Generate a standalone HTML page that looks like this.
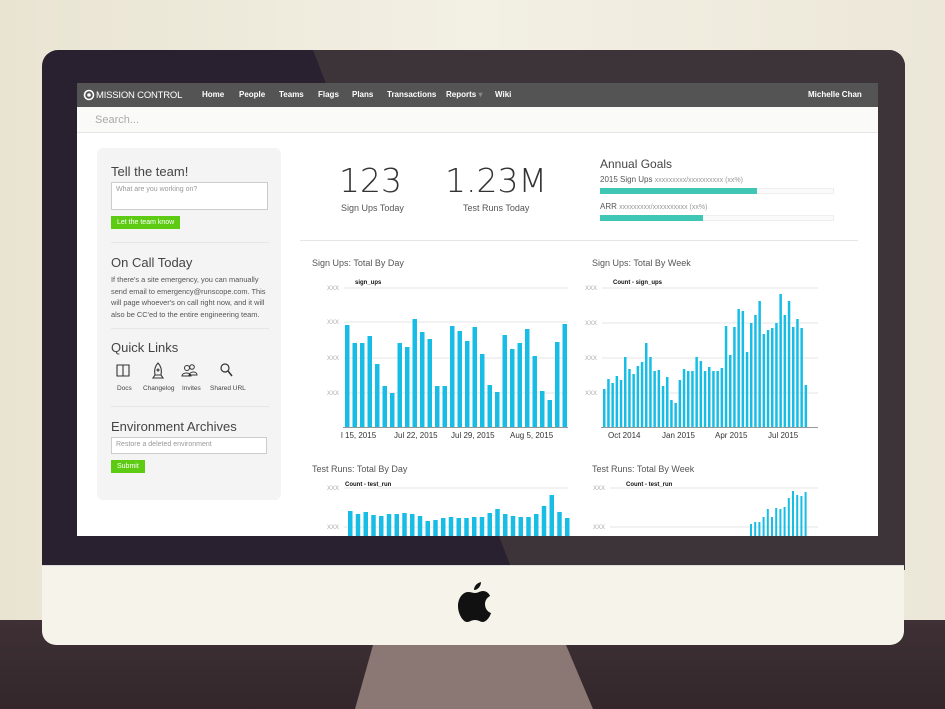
<!DOCTYPE html>
<html><head><meta charset="utf-8"><style>
*{margin:0;padding:0;box-sizing:border-box}
body{width:945px;height:709px;overflow:hidden;position:relative;font-family:"Liberation Sans",sans-serif;background:#ece8da}
.a{position:absolute}
#wall{left:0;top:0;width:945px;height:640px;background:linear-gradient(90deg,#e9e4d2 0%,#f3f0e4 50%,#ece7d8 100%)}
#desk{left:0;top:620px;width:945px;height:89px;background:linear-gradient(180deg,#3e3034,#33272b)}
#stand{left:0;top:0}
#bezel{left:42px;top:50px;width:863px;height:520px;border-radius:16px 16px 0 0;background:#2a2130;overflow:hidden}
#refl{left:0;top:0;width:863px;height:520px;background:#3d3439;clip-path:polygon(271px 0,863px 0,863px 520px,470px 520px)}
#chin{left:42px;top:565px;width:862px;height:80px;background:#f6f3ea;border-radius:0 0 14px 14px;border-top:1px solid #ddd}
#screen{left:77px;top:83px;width:801px;height:453px;background:#fff;overflow:hidden}
#nav{left:0;top:0;width:801px;height:24px;background:#545454;color:#fff;font-size:8px;font-weight:bold}
#nav span{position:absolute;top:7px}
#search{left:0;top:24px;width:801px;height:26px;background:#fafaf8;border-bottom:1px solid #e5e5e5;color:#aaa;font-size:11px;padding:7px 18px}
#side{left:20px;top:65px;width:184px;height:352px;background:#f4f4f4;border-radius:6px}
.h{position:absolute;color:#444;font-size:13px}
.in{position:absolute;background:#fff;border:1px solid #ccc;font-size:7px;color:#999;padding:3px 4px}
.btn{position:absolute;background:#5ccb12;color:#fff;font-size:7px;padding:3px 6px}
.hr{position:absolute;height:1px;background:#e6e6e6}
.t{position:absolute;font-size:9px;color:#555}
.big{position:absolute;font-family:"DejaVu Sans ExtraLight","DejaVu Sans",sans-serif;font-weight:200;font-size:33px;color:#333}
</style></head><body>
<div class="a" id="wall"></div>
<div class="a" id="desk"></div>
<svg class="a" id="stand" width="945" height="709"><polygon points="373,645 566,645 593,709 355,709" fill="#8b7773"/></svg>
<div class="a" id="bezel"><div class="a" id="refl"></div></div>
<div class="a" id="chin"></div>
<svg class="a" style="left:457px;top:581px" width="36" height="42" viewBox="0 0 36 42"><path d="M24,1 C24,5 21,9 17,9 C17,5 20,2 24,1Z M18,12 C21,12 23,10 26,10 C29,10 32,12 33,15 C29,17 28,21 28,23 C28,28 31,31 34,32 C33,36 29,41 26,41 C23,41 22,39 18,39 C14,39 13,41 10,41 C6,41 1,33 1,25 C1,17 6,11 11,11 C14,11 16,12 18,12Z" fill="#111"/></svg>

<div class="a" id="screen">
 <div class="a" id="nav">
  <svg class="a" style="left:6px;top:6px" width="12" height="12"><circle cx="6" cy="6" r="4.5" fill="none" stroke="#fff" stroke-width="1.6"/><circle cx="6" cy="6" r="1.8" fill="#fff"/></svg>
  <span style="left:19px;top:7px;font-size:9.5px;font-weight:normal;letter-spacing:-0.2px">MISSION CONTROL</span>
  <span style="left:125px">Home</span><span style="left:162px">People</span><span style="left:202px">Teams</span><span style="left:241px">Flags</span><span style="left:275px">Plans</span><span style="left:310px">Transactions</span><span style="left:369px">Reports <span style="position:static;color:#888">▾</span></span><span style="left:418px">Wiki</span><span style="left:731px">Michelle Chan</span>
 </div>
 <div class="a" id="search">Search...</div>
 <div class="a" id="side">
  <div class="h" style="left:14px;top:16px;font-size:13px">Tell the team!</div>
  <div class="in" style="left:14px;top:34px;width:157px;height:28px">What are you working on?</div>
  <div class="btn" style="left:14px;top:68px">Let the team know</div>
  <div class="hr" style="left:14px;top:94px;width:158px"></div>
  <div class="h" style="left:14px;top:107px">On Call Today</div>
  <div class="t" style="left:14px;top:126px;width:165px;font-size:7.4px;line-height:11.5px;color:#555">If there's a site emergency, you can manually send email to emergency@runscope.com. This will page whoever's on call right now, and it will also be CC'ed to the entire engineering team.</div>
  <div class="hr" style="left:14px;top:180px;width:158px"></div>
  <div class="h" style="left:14px;top:192px">Quick Links</div>
  <svg class="a" style="left:14px;top:213px" width="130" height="20">
   <path d="M6,4 h6 v11 h-6z M12,4 h6 v11 h-6z" fill="none" stroke="#333" stroke-width="1.1"/>
   <path d="M47,2 c3,3 4,7 3,12 h-6 c-1,-5 0,-9 3,-12z M44,14 l-2,3 h10 l-2,-3 M47,8 a1,1 0 1,0 0.01,0" fill="none" stroke="#333" stroke-width="1.1"/>
   <circle cx="76" cy="7" r="2.5" fill="none" stroke="#333"/><circle cx="81" cy="6" r="2.3" fill="none" stroke="#333"/><path d="M71,15 c0,-4 9,-4 9,0z M78,14 c1,-4 8,-4 8,0z" fill="none" stroke="#333"/>
   <circle cx="114" cy="7" r="4" fill="none" stroke="#333" stroke-width="1.2"/><path d="M117,10 l4,5" stroke="#333" stroke-width="1.5"/>
  </svg>
  <div class="t" style="left:20px;top:237px;font-size:6.5px;color:#444">Docs</div>
  <div class="t" style="left:46px;top:237px;font-size:6.5px;color:#444">Changelog</div>
  <div class="t" style="left:85px;top:237px;font-size:6.5px;color:#444">Invites</div>
  <div class="t" style="left:113px;top:237px;font-size:6.5px;color:#444">Shared URL</div>
  <div class="hr" style="left:14px;top:258px;width:158px"></div>
  <div class="h" style="left:14px;top:271px">Environment Archives</div>
  <div class="in" style="left:14px;top:289px;width:156px;height:17px">Restore a deleted environment</div>
  <div class="btn" style="left:14px;top:312px;padding:3px 6px">Submit</div>
 </div>
 <div class="big" style="left:262px;top:78px">123</div>
 <div class="t" style="left:264px;top:120px">Sign Ups Today</div>
 <div class="big" style="left:368px;top:78px">1.23M</div>
 <div class="t" style="left:386px;top:120px">Test Runs Today</div>
 <div class="h" style="left:523px;top:74px;font-size:12px">Annual Goals</div>
 <div class="t" style="left:523px;top:92px;font-size:8px">2015 Sign Ups <span style="color:#999;font-size:7px">xxxxxxxxx/xxxxxxxxxx (xx%)</span></div>
 <div class="a" style="left:523px;top:105px;width:234px;height:6px;background:#fafafa;border:1px solid #eee"></div>
 <div class="a" style="left:523px;top:105px;width:157px;height:6px;background:#3fc6b5"></div>
 <div class="t" style="left:523px;top:119px;font-size:8px">ARR <span style="color:#999;font-size:7px">xxxxxxxxx/xxxxxxxxxx (xx%)</span></div>
 <div class="a" style="left:523px;top:132px;width:234px;height:6px;background:#fafafa;border:1px solid #eee"></div>
 <div class="a" style="left:523px;top:132px;width:103px;height:6px;background:#3fc6b5"></div>
 <div class="hr" style="left:223px;top:157px;width:558px"></div>
 <div class="t" style="left:235px;top:175px">Sign Ups: Total By Day</div>
 <div class="t" style="left:515px;top:175px">Sign Ups: Total By Week</div>
 <div class="t" style="left:235px;top:381px">Test Runs: Total By Day</div>
 <div class="t" style="left:515px;top:381px">Test Runs: Total By Week</div>
 <svg class="a" style="left:0;top:0" width="801" height="453" viewBox="77 83 801 453" font-family="Liberation Sans" font-size="6" fill="#aaa">
  <g stroke="#e6e6e6" stroke-width="1">
   <path d="M344,288H568M344,322H568M344,358H568M344,393H568M602,288H818M602,323H818M602,358H818M602,393H818M344,488H568M344,527H568M610,488H818M610,527H818"/>
  </g>
  <path d="M343,427.5H568M601,427.5H818" stroke="#999"/>
  <g fill="#aaa"><text x="327" y="290">XXX</text><text x="327" y="324">XXX</text><text x="327" y="360">XXX</text><text x="327" y="395">XXX</text>
  <text x="585" y="290">XXX</text><text x="585" y="325">XXX</text><text x="585" y="360">XXX</text><text x="585" y="395">XXX</text>
  <text x="327" y="490">XXX</text><text x="327" y="529">XXX</text><text x="593" y="490">XXX</text><text x="593" y="529">XXX</text></g>
  <g fill="#111" font-weight="bold" font-size="6"><text x="355" y="284">sign_ups</text><text x="613" y="284">Count - sign_ups</text><text x="345" y="486">Count - test_run</text><text x="626" y="486">Count - test_run</text></g>
  <g fill="#333" font-size="8"><text x="341" y="438">l 15, 2015</text><text x="394" y="438">Jul 22, 2015</text><text x="451" y="438">Jul 29, 2015</text><text x="510" y="438">Aug 5, 2015</text>
  <text x="608" y="438">Oct 2014</text><text x="662" y="438">Jan 2015</text><text x="715" y="438">Apr 2015</text><text x="768" y="438">Jul 2015</text></g>
  <g fill="#18bde6">
<rect x="345" y="325" width="4.5" height="102"/><rect x="352.5" y="343" width="4.5" height="84"/><rect x="360" y="343" width="4.5" height="84"/><rect x="367.5" y="336" width="4.5" height="91"/><rect x="375" y="364" width="4.5" height="63"/><rect x="382.5" y="386" width="4.5" height="41"/><rect x="390" y="393" width="4.5" height="34"/><rect x="397.5" y="343" width="4.5" height="84"/><rect x="405" y="347" width="4.5" height="80"/><rect x="412.5" y="319" width="4.5" height="108"/><rect x="420" y="332" width="4.5" height="95"/><rect x="427.5" y="339" width="4.5" height="88"/><rect x="435" y="386" width="4.5" height="41"/><rect x="442.5" y="386" width="4.5" height="41"/><rect x="450" y="326" width="4.5" height="101"/><rect x="457.5" y="331" width="4.5" height="96"/><rect x="465" y="341" width="4.5" height="86"/><rect x="472.5" y="327" width="4.5" height="100"/><rect x="480" y="354" width="4.5" height="73"/><rect x="487.5" y="385" width="4.5" height="42"/><rect x="495" y="392" width="4.5" height="35"/><rect x="502.5" y="335" width="4.5" height="92"/><rect x="510" y="349" width="4.5" height="78"/><rect x="517.5" y="343" width="4.5" height="84"/><rect x="525" y="329" width="4.5" height="98"/><rect x="532.5" y="356" width="4.5" height="71"/><rect x="540" y="391" width="4.5" height="36"/><rect x="547.5" y="400" width="4.5" height="27"/><rect x="555" y="342" width="4.5" height="85"/><rect x="562.5" y="324" width="4.5" height="103"/>
  </g>
  <g fill="#18bde6">
<rect x="603" y="389" width="2.5" height="38"/><rect x="607.2" y="379" width="2.5" height="48"/><rect x="611.4" y="383" width="2.5" height="44"/><rect x="615.6" y="376" width="2.5" height="51"/><rect x="619.8" y="380" width="2.5" height="47"/><rect x="624" y="357" width="2.5" height="70"/><rect x="628.2" y="369" width="2.5" height="58"/><rect x="632.4" y="374" width="2.5" height="53"/><rect x="636.6" y="366" width="2.5" height="61"/><rect x="640.8" y="362" width="2.5" height="65"/><rect x="645" y="343" width="2.5" height="84"/><rect x="649.2" y="357" width="2.5" height="70"/><rect x="653.4" y="371" width="2.5" height="56"/><rect x="657.6" y="370" width="2.5" height="57"/><rect x="661.8" y="386" width="2.5" height="41"/><rect x="666" y="377" width="2.5" height="50"/><rect x="670.2" y="400" width="2.5" height="27"/><rect x="674.4" y="403" width="2.5" height="24"/><rect x="678.6" y="380" width="2.5" height="47"/><rect x="682.8" y="369" width="2.5" height="58"/><rect x="687" y="371" width="2.5" height="56"/><rect x="691.2" y="371" width="2.5" height="56"/><rect x="695.4" y="357" width="2.5" height="70"/><rect x="699.6" y="361" width="2.5" height="66"/><rect x="703.8" y="371" width="2.5" height="56"/><rect x="708" y="367" width="2.5" height="60"/><rect x="712.2" y="371" width="2.5" height="56"/><rect x="716.4" y="371" width="2.5" height="56"/><rect x="720.6" y="368" width="2.5" height="59"/><rect x="724.8" y="326" width="2.5" height="101"/><rect x="729" y="355" width="2.5" height="72"/><rect x="733.2" y="327" width="2.5" height="100"/><rect x="737.4" y="309" width="2.5" height="118"/><rect x="741.6" y="311" width="2.5" height="116"/><rect x="745.8" y="352" width="2.5" height="75"/><rect x="750" y="323" width="2.5" height="104"/><rect x="754.2" y="315" width="2.5" height="112"/><rect x="758.4" y="301" width="2.5" height="126"/><rect x="762.6" y="334" width="2.5" height="93"/><rect x="766.8" y="330" width="2.5" height="97"/><rect x="771" y="328" width="2.5" height="99"/><rect x="775.2" y="323" width="2.5" height="104"/><rect x="779.4" y="294" width="2.5" height="133"/><rect x="783.6" y="315" width="2.5" height="112"/><rect x="787.8" y="301" width="2.5" height="126"/><rect x="792" y="327" width="2.5" height="100"/><rect x="796.2" y="319" width="2.5" height="108"/><rect x="800.4" y="328" width="2.5" height="99"/><rect x="804.6" y="385" width="2.5" height="42"/>
  </g>
  <g fill="#18bde6">
<rect x="348" y="511" width="4.5" height="30"/><rect x="355.75" y="514" width="4.5" height="30"/><rect x="363.5" y="512" width="4.5" height="30"/><rect x="371.25" y="515" width="4.5" height="30"/><rect x="379" y="516" width="4.5" height="30"/><rect x="386.75" y="514" width="4.5" height="30"/><rect x="394.5" y="514" width="4.5" height="30"/><rect x="402.25" y="513" width="4.5" height="30"/><rect x="410" y="514" width="4.5" height="30"/><rect x="417.75" y="516" width="4.5" height="30"/><rect x="425.5" y="521" width="4.5" height="30"/><rect x="433.25" y="520" width="4.5" height="30"/><rect x="441" y="518" width="4.5" height="30"/><rect x="448.75" y="517" width="4.5" height="30"/><rect x="456.5" y="518" width="4.5" height="30"/><rect x="464.25" y="518" width="4.5" height="30"/><rect x="472" y="517" width="4.5" height="30"/><rect x="479.75" y="517" width="4.5" height="30"/><rect x="487.5" y="513" width="4.5" height="30"/><rect x="495.25" y="509" width="4.5" height="30"/><rect x="503" y="514" width="4.5" height="30"/><rect x="510.75" y="516" width="4.5" height="30"/><rect x="518.5" y="517" width="4.5" height="30"/><rect x="526.25" y="517" width="4.5" height="30"/><rect x="534" y="514" width="4.5" height="30"/><rect x="541.75" y="506" width="4.5" height="40"/><rect x="549.5" y="495" width="4.5" height="50"/><rect x="557.25" y="512" width="4.5" height="30"/><rect x="565" y="518" width="4.5" height="30"/>
  </g>
  <g fill="#18bde6">
<rect x="750" y="524" width="2" height="20"/><rect x="754.2" y="522" width="2" height="20"/><rect x="758.4" y="522" width="2" height="20"/><rect x="762.6" y="517" width="2" height="20"/><rect x="766.8" y="509" width="2" height="30"/><rect x="771" y="517" width="2" height="20"/><rect x="775.2" y="508" width="2" height="30"/><rect x="779.4" y="509" width="2" height="30"/><rect x="783.6" y="507" width="2" height="30"/><rect x="787.8" y="498" width="2" height="40"/><rect x="792" y="491" width="2" height="50"/><rect x="796.2" y="495" width="2" height="50"/><rect x="800.4" y="496" width="2" height="50"/><rect x="804.6" y="492" width="2" height="50"/>
  </g>
 </svg>
</div>
</body></html>
